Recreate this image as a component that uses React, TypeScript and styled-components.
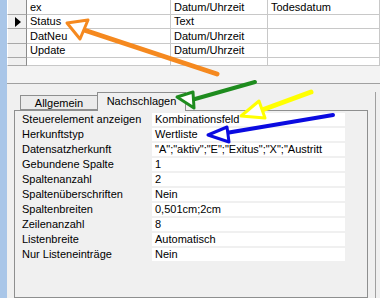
import { Fragment } from "react"
import styled, { createGlobalStyle } from "styled-components"

const GlobalStyle = createGlobalStyle`
    html, body {
        margin: 0;
        padding: 0;
    }

    body {
        width: 380px;
        height: 298px;
        overflow: hidden;
        background: #f0f0f0;
        font-family: "Liberation Sans", Arial, sans-serif;
        font-size: 11px;
        color: #000;
    }
`

const Screen = styled.div`
    position: relative;
    display: flex;
    width: 380px;
    height: 298px;
    overflow: hidden;
`

const WindowEdge = styled.div`
    width: 7px;
    flex-shrink: 0;
    background: #a9c6e8;
`

const Main = styled.div`
    flex: 1;
    display: flex;
    flex-direction: column;
    min-width: 0;
`

const FieldGrid = styled.div`
    display: grid;
    grid-template-columns: 20px 144px 97px 1fr;
    grid-template-rows: 15px 14px 15px 14px 8px;
    height: 66px;
    background: #fff;
`

const Cell = styled.div<{ $selector?: boolean }>`
    box-sizing: border-box;
    display: flex;
    align-items: center;
    padding-left: ${p => (p.$selector ? "0" : "3px")};
    justify-content: ${p => (p.$selector ? "center" : "flex-start")};
    background: ${p => (p.$selector ? "#f0f0f0" : "#fff")};
    border-right: 1px solid ${p => (p.$selector ? "#8c8c8c" : "#c8c8c8")};
    border-bottom: 1px solid ${p => (p.$selector ? "#a8a8a8" : "#c8c8c8")};
    border-left: ${p => (p.$selector ? "1px solid #fff" : "none")};
    white-space: nowrap;
    overflow: hidden;
    line-height: 13px;
`

const RowPointer = styled.div`
    width: 0;
    height: 0;
    margin-left: 2px;
    border-left: 6px solid #000;
    border-top: 5px solid transparent;
    border-bottom: 5px solid transparent;
`

const Spacer = styled.div`
    height: 17px;
    background: #f3f3f3;
    border-bottom: 1px solid #a0a0a0;
`

const PropertyArea = styled.div`
    flex: 1;
    display: flex;
    padding: 8px 0 0 7px;
    min-height: 0;
`

const PanelColumn = styled.div`
    width: 354px;
    display: flex;
    flex-direction: column;
`

const TabStrip = styled.div`
    display: flex;
    align-items: flex-end;
    height: 18px;
    padding-left: 6px;
`

const Tab = styled.div<{ $active?: boolean }>`
    box-sizing: border-box;
    display: flex;
    align-items: center;
    justify-content: center;
    height: ${p => (p.$active ? "19px" : "15px")};
    width: ${p => (p.$active ? "89px" : "78px")};
    margin-bottom: ${p => (p.$active ? "-1px" : "0")};
    margin-left: ${p => (p.$active ? "-1px" : "0")};
    padding-bottom: ${p => (p.$active ? "3px" : "0")};
    background: ${p => (p.$active ? "#f0f0f0" : "#ebebeb")};
    border: 1px solid #8e8f8f;
    border-bottom: ${p => (p.$active ? "none" : "1px solid #8e8f8f")};
    position: relative;
    z-index: ${p => (p.$active ? 1 : 0)};
`

const Panel = styled.div`
    flex: 1;
    box-sizing: border-box;
    border: 1px solid #8e8f8f;
    background: #f0f0f0;
    padding: 2px 0 0 7px;
`

const PropRow = styled.div`
    display: grid;
    grid-template-columns: 130px 193px;
    height: 15px;
`

const PropLabel = styled.div`
    line-height: 13px;
    white-space: nowrap;
`

const PropValue = styled.div`
    height: 13px;
    line-height: 13px;
    padding-left: 3px;
    background: #fff;
    white-space: nowrap;
    overflow: hidden;
`

const RightEdge = styled.div`
    flex: 1;
    margin-left: 7px;
    border-left: 1px solid #a0a0a0;
    background: #f0f0f0;
`

const Annotations = styled.svg`
    position: absolute;
    left: 0;
    top: 0;
    width: 380px;
    height: 298px;
    pointer-events: none;
    z-index: 5;
`

const fields = [
    { name: "ex", type: "Datum/Uhrzeit", desc: "Todesdatum" },
    { name: "Status", type: "Text", desc: "", current: true },
    { name: "DatNeu", type: "Datum/Uhrzeit", desc: "" },
    { name: "Update", type: "Datum/Uhrzeit", desc: "" },
    { name: "", type: "", desc: "" },
]

const properties = [
    ["Steuerelement anzeigen", "Kombinationsfeld"],
    ["Herkunftstyp", "Wertliste"],
    ["Datensatzherkunft", "\"A\";\"aktiv\";\"E\";\"Exitus\";\"X\";\"Austritt"],
    ["Gebundene Spalte", "1"],
    ["Spaltenanzahl", "2"],
    ["Spaltenüberschriften", "Nein"],
    ["Spaltenbreiten", "0,501cm;2cm"],
    ["Zeilenanzahl", "8"],
    ["Listenbreite", "Automatisch"],
    ["Nur Listeneinträge", "Nein"],
]

function Arrow(props: { line: string; head: string; color: string; width: number }) {
    return (
        <g stroke={props.color} strokeLinejoin="round" strokeLinecap="round">
            <polyline points={props.line} fill="none" strokeWidth={props.width} />
            <polygon points={props.head} fill="#fff" strokeWidth={3} />
        </g>
    )
}

export default function App() {
    return (
        <>
            <GlobalStyle />
            <Screen>
                <WindowEdge />
                <Main>
                    <FieldGrid>
                        {fields.map((f, i) => (
                            <Fragment key={i}>
                                <Cell $selector>{f.current && <RowPointer />}</Cell>
                                <Cell>{f.name}</Cell>
                                <Cell>{f.type}</Cell>
                                <Cell>{f.desc}</Cell>
                            </Fragment>
                        ))}
                    </FieldGrid>
                    <Spacer />
                    <PropertyArea>
                        <PanelColumn>
                            <TabStrip>
                                <Tab>Allgemein</Tab>
                                <Tab $active>Nachschlagen</Tab>
                            </TabStrip>
                            <Panel>
                                {properties.map(([label, value]) => (
                                    <PropRow key={label}>
                                        <PropLabel>{label}</PropLabel>
                                        <PropValue>{value}</PropValue>
                                    </PropRow>
                                ))}
                            </Panel>
                        </PanelColumn>
                        <RightEdge />
                    </PropertyArea>
                </Main>
                <Annotations viewBox="0 0 380 298">
                    <Arrow color="#f5891f" width={5} line="217,74 84,30" head="67,23 88,20 80,39" />
                    <Arrow color="#1e8c1e" width={4} line="255,82 195,99" head="177,97 193,92 194,108" />
                    <Arrow color="#ffff00" width={5} line="311,92 262,110" head="241,116 259,101 265,118" />
                    <Arrow color="#0a0ae0" width={4} line="333,115 226,133" head="208,135 227,127 229,142" />
                </Annotations>
            </Screen>
        </>
    )
}
